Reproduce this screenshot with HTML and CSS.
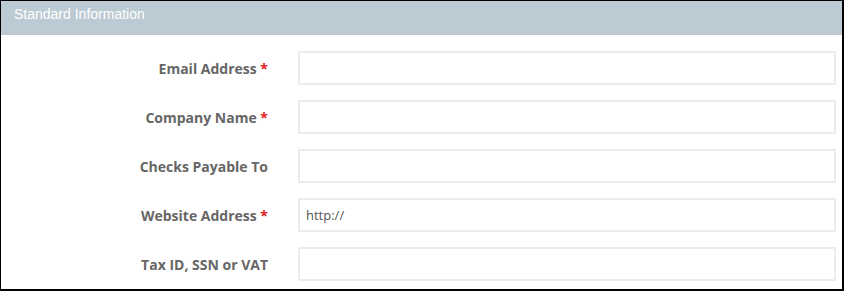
FILE: index.html
```html
<!DOCTYPE html>
<html lang="en">
<head>
    <meta charset="UTF-8">
    <title>Standard Information</title>
    <link rel="stylesheet" href="styles.css">
</head>
<body>
    <div class="panel">
        <div class="panel-heading">Standard Information</div>
        <form class="info-form">
            <label class="field-label" for="email">Email Address <span class="req">*</span></label>
            <input class="field-input" id="email" type="text">

            <label class="field-label" for="company">Company Name <span class="req">*</span></label>
            <input class="field-input" id="company" type="text">

            <label class="field-label" for="payable">Checks Payable To</label>
            <input class="field-input" id="payable" type="text">

            <label class="field-label" for="website">Website Address <span class="req">*</span></label>
            <input class="field-input" id="website" type="text" value="http://">

            <label class="field-label" for="taxid">Tax ID, SSN or VAT</label>
            <input class="field-input" id="taxid" type="text">
        </form>
    </div>
</body>
</html>
```

FILE: styles.css
```css
body {
    margin: 0;
    padding: 0;
    background: #fff;
}
.panel {
    width: 844px;
    height: 291px;
    box-sizing: border-box;
    border-style: solid;
    border-color: #000;
    border-width: 1px 2px 2px 1px;
    background: #fff;
}
.panel-heading {
    height: 34px;
    padding: 5px 13px 0;
    box-sizing: border-box;
    background: #bccad3;
    color: #fff;
    font-family: "Liberation Sans", Arial, sans-serif;
    font-size: 14px;
}
.info-form {
    display: grid;
    grid-template-columns: 267px 1fr;
    column-gap: 30px;
    row-gap: 15px;
    padding: 16px 6px 0 0;
    margin: 0;
}
.field-label {
    align-self: center;
    text-align: right;
    font-family: "Open Sans", sans-serif;
    font-weight: bold;
    font-size: 14px;
    color: #666;
}
.req {
    color: #e3211e;
}
.field-input {
    height: 34px;
    box-sizing: border-box;
    border: 2px solid #ececec;
    padding: 0 6px;
    font-family: "Open Sans", sans-serif;
    font-size: 13px;
    color: #555;
    outline: none;
}
```
